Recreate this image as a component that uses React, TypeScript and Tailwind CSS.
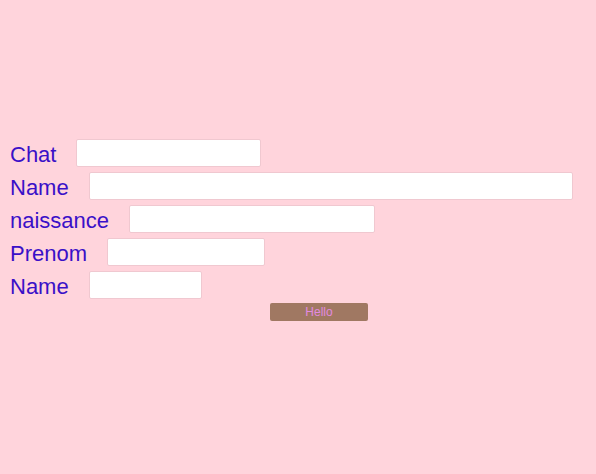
import React from 'react';

const rows = [
  { label: 'Chat', width: 'w-[185px]' },
  { label: 'Name', width: 'w-[484px]' },
  { label: 'naissance', width: 'w-[246px]' },
  { label: 'Prenom', width: 'w-[158px]' },
  { label: 'Name', width: 'w-[113px]' },
];

const App = () => {
  return (
    <div className="w-[596px] h-[474px] bg-[#ffd4dc] pt-[139px] pl-[10px] font-['Liberation_Sans',Arial,sans-serif]">
      <div className="flex flex-col gap-[5px]">
        {rows.map((row, i) => (
          <div key={i} className="flex items-center h-[28px]">
            <span className="text-[22px] leading-none text-[#3a10c8] mr-[20px] pt-[3px]">{row.label}</span>
            <input
              type="text"
              className={`${row.width} h-[28px] bg-white border border-[#f0c8d0] rounded-[2px] outline-none`}
            />
          </div>
        ))}
      </div>
      <div className="flex mt-[4px] pl-[260px]">
        <button className="block w-[98px] h-[18px] bg-[#a07862] rounded-[2px] text-[12px] leading-none text-[#e28ae0]">
          Hello
        </button>
      </div>
    </div>
  );
};

export default App;
